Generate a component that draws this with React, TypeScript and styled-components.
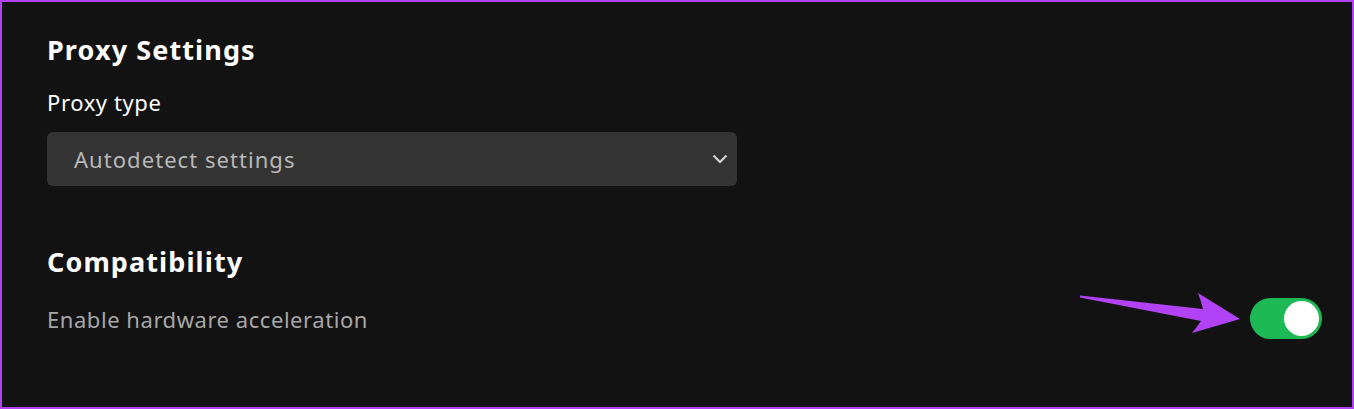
import React, { FC, useState } from 'react';
import styled, { createGlobalStyle } from 'styled-components';

const GlobalStyle = createGlobalStyle`
  html, body {
    margin: 0;
    padding: 0;
    background: #121212;
  }
  * {
    box-sizing: border-box;
  }
`;

// Panel framed by the purple highlight
const Frame = styled.div`
  position: relative;
  width: 1354px;
  height: 409px;
  background: #121212;
  border: 2px solid #b142f5;
  padding: 31px 30px 0 45px;
  font-family: 'Noto Sans', Lato, sans-serif;
  overflow: hidden;
`;

const SectionTitle = styled.h2<{ $gap?: number }>`
  margin: ${(p) => p.$gap ?? 0}px 0 0;
  font-size: 27px;
  line-height: 34px;
  font-weight: 700;
  letter-spacing: 1.1px;
  color: #fff;
`;

const FieldLabel = styled.div`
  margin-top: 21px;
  font-size: 22px;
  line-height: 28px;
  letter-spacing: 0.6px;
  color: #fff;
`;

const SelectBox = styled.div`
  margin-top: 16px;
  width: 690px;
  height: 54px;
  border-radius: 6px;
  background: #333333;
  display: flex;
  align-items: center;
  justify-content: space-between;
  padding: 0 9px 0 27px;
  color: #b8b8b8;
  font-size: 22px;
  line-height: 28px;
  letter-spacing: 1.05px;
  cursor: pointer;
`;

const Chevron = styled.svg`
  width: 16px;
  height: 10px;
`;

const SettingRow = styled.div`
  margin-top: 19px;
  display: flex;
  align-items: center;
  justify-content: space-between;
`;

const SettingText = styled.span`
  font-size: 22px;
  line-height: 28px;
  letter-spacing: 0.55px;
  color: #a7a7a7;
`;

const Toggle = styled.button<{ $on: boolean }>`
  width: 72px;
  height: 41px;
  border: none;
  border-radius: 21px;
  padding: 3px;
  background: ${(p) => (p.$on ? '#1db954' : '#727272')};
  display: flex;
  justify-content: ${(p) => (p.$on ? 'flex-end' : 'flex-start')};
  cursor: pointer;
`;

const Knob = styled.span`
  width: 35px;
  height: 35px;
  border-radius: 50%;
  background: #fff;
`;

// Callout arrow drawn over the panel
const Pointer = styled.svg`
  position: absolute;
  left: 0;
  top: 0;
  pointer-events: none;
`;

const App: FC = () => {
  const [hwAccel, setHwAccel] = useState(true);

  return (
    <>
      <GlobalStyle />
      <Frame>
        <SectionTitle>Proxy Settings</SectionTitle>
        <FieldLabel>Proxy type</FieldLabel>
        <SelectBox>
          <span>Autodetect settings</span>
          <Chevron viewBox="0 0 16 10">
            <path d="M1.5 1.5 L8 8 L14.5 1.5" fill="none" stroke="#cfcfcf" strokeWidth="2.2" />
          </Chevron>
        </SelectBox>

        <SectionTitle $gap={59}>Compatibility</SectionTitle>
        <SettingRow>
          <SettingText>Enable hardware acceleration</SettingText>
          <Toggle $on={hwAccel} onClick={() => setHwAccel(!hwAccel)} aria-label="Enable hardware acceleration">
            <Knob />
          </Toggle>
        </SettingRow>

        <Pointer width="1350" height="405" viewBox="2 2 1350 405">
          <path
            d="M1080 295.5 L1203 309 Q1201 301 1198 293 L1240 319 L1192 333 Q1197 327 1201 321 L1080 297.5 Z"
            fill="#b142f5"
          />
        </Pointer>
      </Frame>
    </>
  );
};

export default App;
